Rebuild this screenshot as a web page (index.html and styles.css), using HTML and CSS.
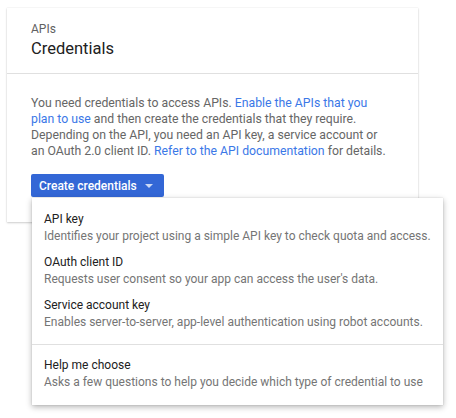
FILE: index.html
```html
<!DOCTYPE html>
<html lang="en">
<head>
    <meta charset="UTF-8">
    <meta name="viewport" content="width=device-width, initial-scale=1.0">
    <title>Credentials</title>
    <link rel="stylesheet" href="styles.css">
</head>
<body>
    <div class="page">
        <div class="card">
            <div class="card-header">
                <div class="eyebrow">APIs</div>
                <h2>Credentials</h2>
            </div>

            <div class="card-body">
                <p>
                    You need credentials to access APIs. <a href="#">Enable the APIs that you plan to use</a>
                    and then create the credentials that they require. Depending on the API, you need an
                    API key, a service account or an OAuth 2.0 client ID.
                    <a href="#">Refer to the API documentation</a> for details.
                </p>

                <div class="dropdown">
                    <button class="btn-primary">Create credentials <span class="caret"></span></button>

                    <!-- open menu -->
                    <div class="menu">
                        <div class="menu-item">
                            <div class="item-title">API key</div>
                            <div class="item-desc">Identifies your project using a simple API key to check quota and access.</div>
                        </div>
                        <div class="menu-item">
                            <div class="item-title">OAuth client ID</div>
                            <div class="item-desc">Requests user consent so your app can access the user's data.</div>
                        </div>
                        <div class="menu-item">
                            <div class="item-title">Service account key</div>
                            <div class="item-desc">Enables server-to-server, app-level authentication using robot accounts.</div>
                        </div>
                        <div class="menu-divider"></div>
                        <div class="menu-item">
                            <div class="item-title">Help me choose</div>
                            <div class="item-desc">Asks a few questions to help you decide which type of credential to use</div>
                        </div>
                    </div>
                </div>
            </div>
        </div>
    </div>
</body>
</html>
```

FILE: styles.css
```css
html, body {
    height: 100%;
}

body {
    font-family: Roboto, "Liberation Sans", Arial, sans-serif;
    background-color: #fff;
    margin: 0;
    padding: 0;
}

.page {
    min-height: 418px;
    padding: 8px 0 0 7px;
    box-sizing: border-box;
}

.card {
    width: 411px;
    background-color: #fff;
    box-shadow: 0 1px 2px rgba(0, 0, 0, 0.18), 0 0 1px rgba(0, 0, 0, 0.15);
}

.card-header {
    padding: 13px 24px 12px;
    border-bottom: 1px solid #e0e0e0;
}

.eyebrow {
    font-size: 12px;
    line-height: 16px;
    color: #616161;
}

.card-header h2 {
    margin: 0;
    font-size: 16.5px;
    line-height: 24px;
    font-weight: 400;
    color: #212121;
}

.card-body {
    padding: 21px 24px 25px;
}

.card-body p {
    max-width: 357px;
    margin: 0 0 15px;
    font-size: 12.25px;
    line-height: 16px;
    color: #666;
}

.card-body a {
    color: #3b78e7;
    text-decoration: none;
}

.dropdown {
    position: relative;
    display: inline-block;
}

.btn-primary {
    display: flex;
    align-items: center;
    height: 23px;
    padding: 0 11px 0 8px;
    border: none;
    border-radius: 2px;
    background-color: #3367d6;
    color: #fff;
    font-family: inherit;
    font-size: 12px;
    font-weight: 500;
    cursor: pointer;
}

.caret {
    width: 0;
    height: 0;
    margin-left: 8px;
    border-left: 4px solid transparent;
    border-right: 4px solid transparent;
    border-top: 4px solid rgba(255, 255, 255, 0.75);
}

/* dropdown menu sits over the card */
.menu {
    position: absolute;
    left: 1px;
    top: 24px;
    width: 411px;
    padding: 9px 0;
    background-color: #fff;
    box-shadow: 0 2px 6px rgba(0, 0, 0, 0.3), 0 0 1px rgba(0, 0, 0, 0.2);
    z-index: 1;
}

.menu-item {
    padding: 4px 12px 5px;
    font-size: 12px;
    line-height: 17px;
    white-space: nowrap;
}

.item-title {
    color: #212121;
}

.item-desc {
    color: #757575;
}

.menu-divider {
    height: 1px;
    margin: 8px 0;
    background-color: #e0e0e0;
}
```
